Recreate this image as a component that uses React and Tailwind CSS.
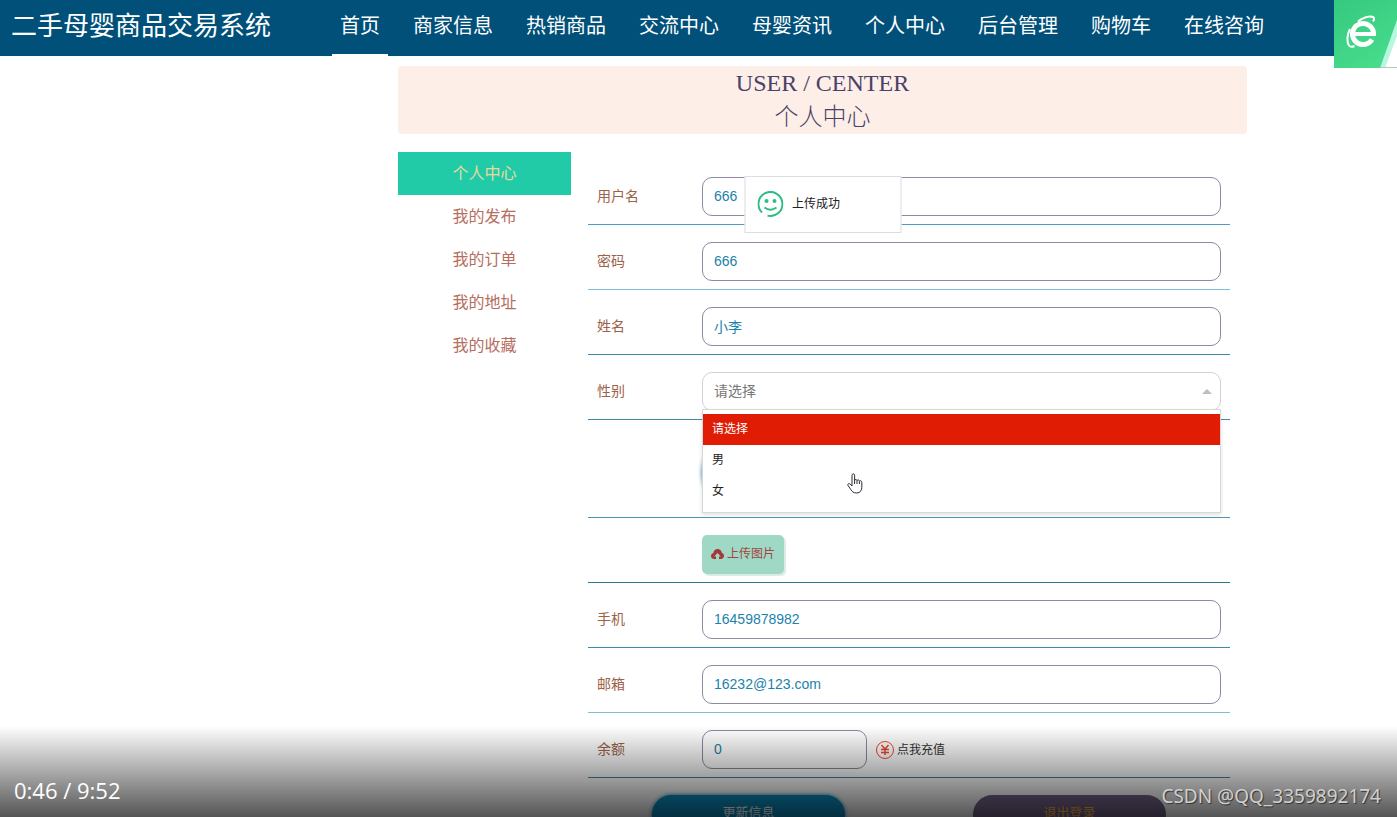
import { useState } from "react";

const navItems = [
  "首页",
  "商家信息",
  "热销商品",
  "交流中心",
  "母婴资讯",
  "个人中心",
  "后台管理",
  "购物车",
  "在线咨询",
];

const menuItems = ["个人中心", "我的发布", "我的订单", "我的地址", "我的收藏"];

const genders = ["请选择", "男", "女"];

const inputClass =
  "block h-[39px] rounded-[10px] border border-[#8d89a0] bg-white px-[11px] pb-[2px] text-sm text-[#1b82ac] outline-none";

function Row({ id, label, line = "border-[#3f8aa8]", children }) {
  return (
    <div
      className={`flex items-center border-b pt-[17px] pr-[9px] pb-2 pl-[9px] ${line}`}
    >
      <div className="w-[105px] shrink-0 pb-[2px] text-sm text-[#9c6248]">
        {label && <label htmlFor={id}>{label}</label>}
      </div>
      {children}
    </div>
  );
}

function Header() {
  return (
    <header className="flex h-14 bg-[#00507a] text-white">
      <h1 className="ml-[11px] w-[321px] shrink-0 text-[26px] leading-[52px]">
        二手母婴商品交易系统
      </h1>
      <nav className="flex gap-[17px] text-xl leading-[52px] whitespace-nowrap">
        {navItems.map((item, i) => (
          <a
            key={item}
            href="#"
            className={`border-b-2 px-2 ${
              i === 0 ? "border-white" : "border-transparent"
            }`}
          >
            {item}
          </a>
        ))}
      </nav>
    </header>
  );
}

function BrowserBadge() {
  return (
    <svg
      className="absolute top-0 right-0 h-[68px] w-[63px]"
      viewBox="0 0 63 68"
      fill="none"
    >
      <defs>
        <linearGradient id="badge" x1="0" y1="0" x2="0.6" y2="1">
          <stop offset="0" stopColor="#35c880" />
          <stop offset="1" stopColor="#46dc8b" />
        </linearGradient>
      </defs>
      <path d="M0 0h63v68H0z" fill="url(#badge)" />
      <path d="M63 20v48H46z" fill="#b5f8df" />
      <path d="M63 36v32H51z" fill="#fff" />
      <path d="M46 67.500h17" stroke="#b5c8bf" />
      <path d="M18 34h24" stroke="#fff" strokeWidth="4" />
      <path
        d="M39.500 35a10.500 10.500 0 1 0-1.500 4.500"
        stroke="#fff"
        strokeWidth="5"
      />
      <path
        d="M24 21.500c4-4 12-6 15-4.500 1.500.8 1.500 2.500 0 4.500M16 29c-3 6-3.500 13-1 16.500 1.200 1.600 3.500 1.500 5.500.5"
        stroke="#fff"
        strokeWidth="2"
      />
    </svg>
  );
}

function Toast() {
  return (
    <div
      role="status"
      className="absolute top-[120px] left-1/2 z-20 flex h-[57px] w-[157px] -translate-x-1/2 items-center gap-[9px] border border-[#dcdce2] bg-white px-3 pb-[2px] text-xs text-[#222]"
    >
      <svg className="h-[26px] w-[26px]" viewBox="0 0 26 26" fill="none">
        <path
          d="M4.500 21.500A12 12 0 1 1 10 24.600"
          stroke="#2fbd86"
          strokeWidth="2"
        />
        <circle cx="9" cy="10" r="2" fill="#2fbd86" />
        <circle cx="17" cy="10" r="2" fill="#2fbd86" />
        <path d="M7 16.500q6 4.500 12 0" stroke="#2fbd86" strokeWidth="2" />
      </svg>
      上传成功
    </div>
  );
}

function GenderSelect() {
  const [gender, setGender] = useState(genders[0]);

  return (
    <div className="relative flex-1">
      <select
        id="gender"
        value={gender}
        onChange={(e) => setGender(e.target.value)}
        className="block h-[39px] w-full appearance-none rounded-[10px] border border-[#d2d2d6] bg-white px-[11px] pb-[2px] text-sm text-[#777] outline-none"
      >
        {genders.map((item) => (
          <option key={item}>{item}</option>
        ))}
      </select>
      <svg
        className="absolute top-[17px] right-[9px] h-[5px] w-[10px]"
        viewBox="0 0 10 5"
      >
        <path d="M0 5L5 0l5 5z" fill="#bdbdbd" />
      </svg>
      <ul
        role="listbox"
        className="absolute top-[37px] left-0 z-10 w-full border border-[#d8d8d8] bg-white pt-1 pb-[5px] text-xs leading-[31px] text-[#222] shadow-[0_2px_4px_rgba(0,0,0,0.12)]"
      >
        {genders.map((item) => (
          <li
            key={item}
            role="option"
            aria-selected={item === gender}
            onClick={() => setGender(item)}
            className={`cursor-pointer px-[9px] ${
              item === gender ? "bg-[#e01c04] text-white" : ""
            }`}
          >
            {item}
          </li>
        ))}
      </ul>
      {/* Mouse pointer */}
      <svg
        className="absolute top-[101px] left-[145px] z-20 h-[21px] w-[16px]"
        viewBox="0 0 16 21"
      >
        <path
          d="M5 13V2.200C5 .4 7.600.4 7.600 2.200V7.500c0-1.500 2.400-1.300 2.400.2.200-1.300 2.400-1 2.400.6.300-1.100 2.400-.8 2.400 1v5c0 3-1.600 5.700-5 5.700-3.600 0-4.800-1.500-6-3.500L1 12.500c-.8-1.500 1-2.600 2.200-1.400z"
          fill="#fff"
          stroke="#2b2b35"
          strokeLinejoin="round"
        />
        <path d="M7.600 7v4M10 8v3M12.400 8.500V11" stroke="#2b2b35" />
      </svg>
    </div>
  );
}

function ProfileForm() {
  return (
    <form
      className="mr-[17px] flex-1 pt-2"
      onSubmit={(e) => e.preventDefault()}
    >
      <Row id="username" label="用户名" line="border-[#4c9dbf]">
        <input id="username" defaultValue="666" className={`${inputClass} w-full`} />
      </Row>
      <Row id="password" label="密码" line="border-[#7fbdd8]">
        <input id="password" defaultValue="666" className={`${inputClass} w-full`} />
      </Row>
      <Row id="name" label="姓名">
        <input id="name" defaultValue="小李" className={`${inputClass} w-full`} />
      </Row>
      <Row id="gender" label="性别">
        <GenderSelect />
      </Row>
      <Row line="border-[#4a96b0]">
        <div className="h-[72px] w-[72px] rounded-full bg-[#d9e8ee] shadow-[0_0_4px_#1b82ac]" />
      </Row>
      <Row line="border-[#2f7594]">
        <button
          type="button"
          className="flex h-[39px] items-center gap-[3px] rounded-[5px] bg-[#9fd9c5] px-[9px] pb-[2px] text-xs text-[#a0453f] shadow-[2px_2px_1px_#d9ebe4]"
        >
          <svg className="h-[10px] w-[13px]" viewBox="0 0 13 10">
            <path
              d="M5 10H3.200C1.400 10 0 8.600 0 6.900 0 5.400 1 4.200 2.400 3.900 2.800 1.700 4.500 0 6.600 0c2.200 0 3.900 1.600 4.200 3.800C12.100 4.200 13 5.400 13 6.800 13 8.600 11.700 10 10 10H8V7.500h1.800L6.500 4 3.200 7.500H5z"
              fill="#a5363a"
            />
          </svg>
          上传图片
        </button>
      </Row>
      <Row id="phone" label="手机">
        <input id="phone" defaultValue="16459878982" className={`${inputClass} w-full`} />
      </Row>
      <Row id="email" label="邮箱" line="border-[#7fbdd8]">
        <input id="email" defaultValue="16232@123.com" className={`${inputClass} w-full`} />
      </Row>
      <Row id="balance" label="余额">
        <input id="balance" defaultValue="0" className={`${inputClass} w-[165px]`} />
        <a href="#" className="ml-[9px] flex items-center gap-[3px] text-xs text-[#333]">
          <svg
            className="h-[18px] w-[18px]"
            viewBox="0 0 18 18"
            fill="none"
            stroke="#f0452e"
          >
            <circle cx="9" cy="9" r="8.500" />
            <path d="M5.500 4L9 8l3.500-4M9 8v6M5 8.500h8M5 11.500h8" strokeWidth="1.500" />
          </svg>
          点我充值
        </a>
      </Row>
      <div className="flex justify-around pt-[17px] text-[13px]">
        <button
          type="submit"
          className="h-[39px] w-[193px] rounded-[20px] bg-[#0a8cbf] pb-1 text-white shadow-[0_0_4px_#0a8cbf]"
        >
          更新信息
        </button>
        <button
          type="button"
          className="h-[39px] w-[193px] rounded-[20px] bg-[#74638a] pb-1 text-[#f7b23a]"
        >
          退出登录
        </button>
      </div>
    </form>
  );
}

export default function App() {
  return (
    <div className="relative h-screen overflow-hidden bg-white font-['Liberation_Sans','Noto_Sans_CJK_SC',sans-serif]">
      <Header />
      <BrowserBadge />

      <main className="relative mr-[150px] ml-[398px] pt-[10px]">
        <div className="rounded bg-[#fdeee7] text-center font-['Liberation_Serif','Noto_Sans_CJK_SC',serif] text-2xl leading-[34px] font-light text-[#48426a]">
          <p>USER / CENTER</p>
          <p>个人中心</p>
        </div>
        <Toast />

        <div className="mt-[18px] flex gap-[17px]">
          <aside className="w-[173px] shrink-0 text-center text-base">
            {menuItems.map((item, i) => (
              <a
                key={item}
                href="#"
                className={`block leading-[43px] ${
                  i === 0 ? "bg-[#21cba7] text-[#e6d9a0]" : "text-[#b66e5e]"
                }`}
              >
                {item}
              </a>
            ))}
          </aside>
          <ProfileForm />
        </div>
      </main>

      {/* Player controls */}
      <div className="absolute inset-x-0 bottom-0 z-30 flex h-[91px] items-end justify-between bg-linear-to-b from-transparent to-black/67 pr-4 pb-[7px] pl-[14px]">
        <span className="font-['Open_Sans',sans-serif] text-[22px] leading-10 text-white">
          0:46 / 9:52
        </span>
        <span className="font-['Noto_Sans',sans-serif] text-[19px] leading-7 text-[#d0d0d0] [text-shadow:1px_1px_1px_#333]">
          CSDN @QQ_3359892174
        </span>
      </div>
    </div>
  );
}
